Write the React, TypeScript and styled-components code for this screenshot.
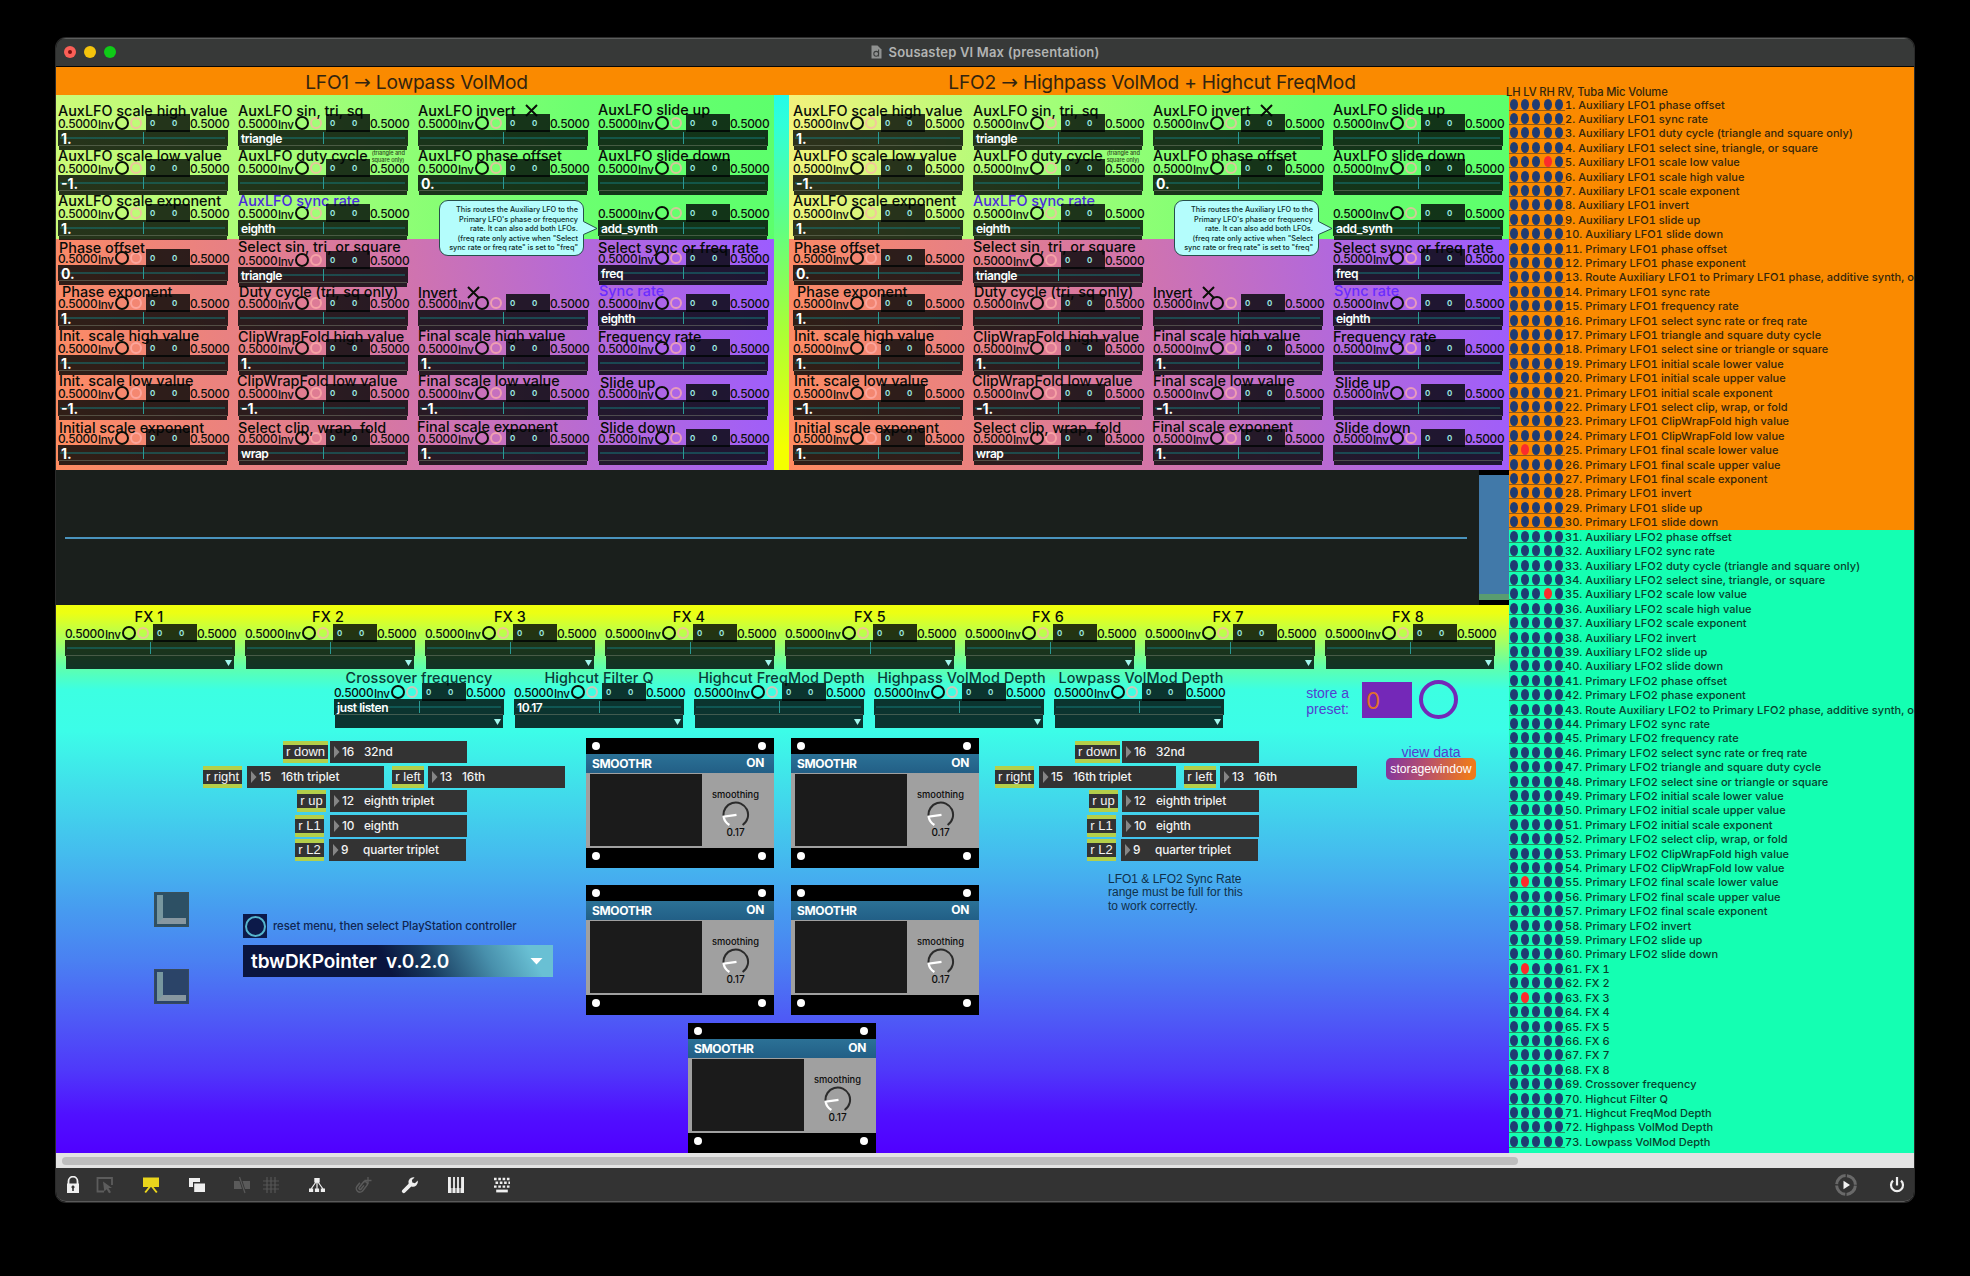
import React from 'react';
import styled, { createGlobalStyle, css } from 'styled-components';

const Global = createGlobalStyle`
  * { box-sizing: border-box; }
  html, body { margin: 0; background: #000; }
  body { width: 1970px; height: 1276px; overflow: hidden; font-family: Inter, "Liberation Sans", sans-serif; color: #0b0f0b; }
`;

/* ---------- window ---------- */

const Desktop = styled.main`
  width: 1970px;
  height: 1276px;
  padding: 38px 56px 0;
  background: #000;
`;

const Window = styled.section`
  display: flex;
  flex-direction: column;
  width: 1858px;
  height: 1164px;
  border-radius: 10px;
  overflow: hidden;
  box-shadow: 0 0 0 1px #2b2b2b;
`;

const TitleBar = styled.header`
  display: grid;
  grid-template-columns: 1fr auto 1fr;
  align-items: center;
  height: 29px;
  padding: 0 8px 1px;
  background: #373938;
  border-top: 1px solid #5c5e5d;
  border-bottom: 1px solid #050505;
`;

const Lights = styled.div`
  display: flex;
  gap: 8px;
`;

const Light = styled.span<{ $color: string }>`
  display: grid;
  place-items: center;
  width: 12px;
  height: 12px;
  border-radius: 50%;
  background: ${(p) => p.$color};
  i { width: 4px; height: 4px; border-radius: 50%; background: #7a0d0d; }
`;

const WindowTitle = styled.h1`
  display: flex;
  align-items: center;
  gap: 7px;
  margin: 0;
  font-size: 13px;
  font-weight: 600;
  letter-spacing: 0.18px;
  color: #b2b4b3;
  white-space: nowrap;
`;

const Content = styled.div`
  display: flex;
  height: 1086px;
`;

const Patch = styled.div`
  display: flex;
  flex-direction: column;
  width: 1453px;
`;

/* ---------- LFO panels ---------- */

const Headings = styled.div`
  display: grid;
  grid-template-columns: 721px 732px;
  height: 28px;
  background: #fa8a00;
`;

const Heading = styled.h2<{ $shift?: number }>`
  margin: 0;
  padding-left: ${(p) => p.$shift ?? 0}px;
  text-align: center;
  font-size: 19.2px;
  font-weight: 400;
  line-height: 31px;
  letter-spacing: -0.22px;
  color: #33240f;
  white-space: nowrap;
  span { font-family: "DejaVu Sans", sans-serif; font-size: 20px; line-height: 1; }
`;

const Panels = styled.div`
  display: flex;
  height: 375px;
  background: linear-gradient(#25fbe8, #30ffd8 8%, #62ff80 36%, #a8ff38 62%, #f4ff00 94%);
`;

const LfoPanel = styled.section<{ $second?: boolean }>`
  position: relative;
  display: grid;
  grid-template-columns: repeat(4, 170px);
  grid-auto-rows: 45px;
  column-gap: 10px;
  align-content: start;
  width: ${(p) => (p.$second ? 720 : 718)}px;
  margin-left: ${(p) => (p.$second ? 15 : 0)}px;
  padding: 5px 0 0 ${(p) => (p.$second ? 4 : 2)}px;
  background:
    linear-gradient(95deg, ${(p) => (p.$second ? '#f3f27c' : '#ccfa78')}, #a2fe78 36%, #6cff70 72%, #5cff6c) 0 0 / 100% 144px no-repeat,
    linear-gradient(80deg, #ff8c60, #e78084 28%, #cf73b0 52%, #b268dc 76%, #9c5cff) 0 144px / 100% 231px no-repeat;
`;

const Cell = styled.div<{ $dy?: number }>`
  width: 170px;
  height: 45px;
  margin-top: ${(p) => p.$dy ?? 0}px;
`;

const CellTitle = styled.h3<{ $dx?: number; $dy?: number; $color?: string; $center?: boolean }>`
  display: flex;
  align-items: center;
  justify-content: ${(p) => (p.$center ? 'center' : 'flex-start')};
  height: 14px;
  margin: 0;
  padding-top: 7px;
  font-size: 14.4px;
  font-weight: 500;
  line-height: 21px;
  letter-spacing: ${(p) => (p.$center ? 0.12 : 0)}px;
  white-space: nowrap;
  color: ${(p) => p.$color ?? '#080c08'};
  transform: translate(${(p) => p.$dx ?? 0}px, ${(p) => p.$dy ?? 0}px);
  svg { margin-left: 9px; }
`;

const TinyNote = styled.small`
  margin: 3px 0 0 4px;
  font-size: 5.6px;
  font-weight: 500;
  line-height: 7px;
  letter-spacing: -0.05px;
  color: #2d4a20;
`;

const ControlRow = styled.div`
  display: grid;
  grid-template-columns: 40px 16px 14px 1fr 44px 38px;
  height: 16px;
  font-weight: 500;
  line-height: 20px;
  white-space: nowrap;
`;

const Amount = styled.span`
  font-size: 11.9px;
  letter-spacing: -0.32px;
`;

const Inv = styled.span`
  font-size: 11.6px;
  line-height: 23px;
  letter-spacing: -0.3px;
`;

const Ring = styled.span<{ $pink?: boolean }>`
  align-self: start;
  width: ${(p) => (p.$pink ? 12 : 14)}px;
  height: ${(p) => (p.$pink ? 12 : 14)}px;
  margin: ${(p) => (p.$pink ? '3px 0 0 2px' : '2px 0 0 1px')};
  border: 2px solid ${(p) => (p.$pink ? 'rgba(255, 178, 172, 0.72)' : '#0a0f08')};
  border-radius: 50%;
`;

const Pair = styled.span`
  position: relative;
  display: flex;
  gap: 17px;
  height: 18px;
  padding-left: 4px;
  background: rgba(0, 5, 5, 0.81);
  font-size: 8px;
  font-weight: 600;
  line-height: 18px;
  color: #9ff0e6;
  span { width: 5px; }
`;

const SliderBar = styled.div<{ $numeric?: boolean }>`
  position: relative;
  height: 16px;
  padding-left: 3px;
  background:
    linear-gradient(#2a9a94, #2a9a94) 85px 2px / 1px 12px no-repeat,
    linear-gradient(rgba(20, 120, 120, 0.5), rgba(20, 120, 120, 0.5)) 2px 7px / 165px 2px no-repeat,
    rgba(0, 5, 5, 0.81);
  color: #fff;
  font-size: ${(p) => (p.$numeric ? 14 : 12)}px;
  font-weight: ${(p) => (p.$numeric ? 700 : 600)};
  line-height: ${(p) => (p.$numeric ? 17 : 18)}px;
  letter-spacing: ${(p) => (p.$numeric ? 0 : -0.42)}px;
`;

const Strip = styled.div<{ $menu?: boolean }>`
  position: relative;
  display: flex;
  align-items: center;
  justify-content: flex-end;
  height: ${(p) => (p.$menu ? 13 : 4)}px;
  margin: 0 1px;
  padding-right: 2px;
  background: rgba(0, 5, 5, 0.81);
  box-shadow: 0 -1px 0 rgba(130, 140, 120, 0.45);
`;

const Bubble = styled.aside<{ $left: number }>`
  position: absolute;
  left: ${(p) => p.$left}px;
  top: 105px;
  width: 145px;
  height: 56px;
  padding: 4px 5px 0 0;
  border: 1px solid #26504c;
  border-radius: 9px;
  background: #b4fdfc;
  font-size: 7.3px;
  font-weight: 500;
  line-height: 9.55px;
  letter-spacing: -0.01px;
  text-align: right;
  white-space: nowrap;
  color: #10302e;
  svg { position: absolute; left: 142px; top: 19px; }
`;

/* ---------- scope ---------- */

const Scope = styled.section`
  display: grid;
  grid-template-columns: 1fr 30px;
  height: 135px;
  background: #1a1f1c;
`;

const Trace = styled.div`
  align-self: center;
  height: 2px;
  margin: 0 12px 0 9px;
  background: #4a93bd;
`;

const Meter = styled.div`
  background: linear-gradient(#000 5px, #4179a9 5px 124px, #599c70 124px 130px, #000 130px);
`;

/* ---------- lower patch ---------- */

const Stage = styled.section`
  height: 548px;
  padding-top: 5px;
  background: linear-gradient(
    #f0ff0c 0, #ecff14 1.5%, #a8ff60 6.5%, #62ffa8 11%, #3cffe2 15.5%, #3cfde8 23%, #40e2ea 32%,
    #44bdee 45%, #479af0 56%, #4a80f2 65%, #4e5cf6 75%, #4f38fa 85%, #5010ff 93%, #5000ff 100%
  );
`;

const FxRow = styled.div`
  display: flex;
  gap: 10px;
  height: 59px;
  padding-left: 9px;
`;

const FilterRow = styled(FxRow)`
  padding-left: 278px;
`;

const Store = styled.div`
  display: flex;
  align-items: flex-start;
  margin: 13px 0 0 72px;
`;

const StoreLabel = styled.p`
  width: 43px;
  margin: 3px 13px 0 0;
  font: 14px/16px "Liberation Sans", Arial, sans-serif;
  text-align: right;
  white-space: nowrap;
  color: #5340cf;
`;

const StoreNumber = styled.span`
  width: 50px;
  height: 36px;
  padding-left: 4px;
  background: #7428b8;
  color: #e2702a;
  font-size: 22.5px;
  line-height: 37px;
`;

const StoreRing = styled.span`
  width: 39px;
  height: 39px;
  margin: -2px 0 0 7px;
  border: 4.5px solid #7428b8;
  border-radius: 50%;
`;

const Body = styled.div`
  display: flex;
`;

const LeftColumn = styled.div`
  width: 530px;
  padding-top: 13px;
`;

const PadGroup = styled.div<{ $left: number }>`
  display: flex;
  flex-direction: column;
  gap: 2.5px;
  width: 362px;
  margin-left: ${(p) => p.$left}px;
`;

const PadRow = styled.div<{ $left: number }>`
  display: flex;
  height: 22px;
  padding-left: ${(p) => p.$left}px;
`;

const Receive = styled.span<{ $w: number; $gap: number; $before?: number }>`
  width: ${(p) => p.$w}px;
  margin: 0 ${(p) => p.$gap}px 0 ${(p) => p.$before ?? 0}px;
  border-top: 4px solid #b4cf4a;
  border-bottom: 4px solid #b4cf4a;
  background: #333;
  color: #f4f4f4;
  font-family: "Liberation Sans", Arial, sans-serif;
  font-size: 13px;
  line-height: 14px;
  text-align: center;
  white-space: nowrap;
`;

const NumberBox = styled.span`
  display: grid;
  grid-template-columns: 8px 22px 1fr;
  align-items: center;
  width: 137px;
  padding-left: 4px;
  background: #333;
  color: #f4f4f4;
  font-size: 11.8px;
  font-weight: 500;
  letter-spacing: -0.1px;
  white-space: nowrap;
`;

const Lower = styled.div`
  display: flex;
  margin: 31px 0 0 98px;
`;

const Corners = styled.div`
  display: flex;
  flex-direction: column;
  gap: 42px;
`;

const Corner = styled.span<{ $color: string }>`
  display: flex;
  width: 35px;
  height: 35px;
  padding: 2px;
  background: ${(p) => p.$color};
  border: 1px solid rgba(70, 80, 80, 0.5);
  &::before {
    content: '';
    flex: 1;
    border-left: 6px solid #77979f;
    border-bottom: 6px solid #8797a0;
  }
`;

const Controller = styled.div`
  margin: 22px 0 0 54px;
`;

const ResetLine = styled.div`
  display: flex;
  align-items: center;
  gap: 6px;
  height: 24px;
  font-size: 11.3px;
  font-weight: 500;
  letter-spacing: -0.03px;
  white-space: nowrap;
  color: #0f2550;
`;

const ResetButton = styled.span`
  display: grid;
  place-items: center;
  width: 24px;
  height: 24px;
  background: #0c1a4a;
  &::before {
    content: '';
    width: 17px;
    height: 17px;
    border: 2px solid #55b5cd;
    border-radius: 50%;
  }
`;

const DeviceMenu = styled.div`
  display: flex;
  align-items: center;
  justify-content: space-between;
  width: 310px;
  height: 32px;
  margin-top: 7px;
  padding: 0 10px 0 8px;
  background: linear-gradient(62deg, #0a153f 46%, #16385c 58%, #4890ac 78%, #69c0d4 92%);
  color: #fff;
  font-size: 19px;
  font-weight: 600;
  letter-spacing: -0.1px;
  white-space: pre;
`;

const Modules = styled.div`
  display: grid;
  grid-template-columns: 188px 188px;
  column-gap: 17px;
  width: 393px;
  padding-top: 10px;
`;

const Module = styled.article<{ $top?: number; $last?: boolean }>`
  width: 188px;
  height: 130px;
  margin-top: ${(p) => p.$top ?? 0}px;
  ${(p) => p.$last && css`grid-column: 1 / 3; justify-self: start; margin-left: 102px;`}
  background: #000;
`;

const Screws = styled.div<{ $h: number }>`
  display: flex;
  justify-content: space-between;
  height: ${(p) => p.$h}px;
  padding: 4px 8.5px 0 6px;
  &::before, &::after {
    content: '';
    width: 8px;
    height: 8px;
    border-radius: 50%;
    background: #fff;
  }
`;

const ModuleBar = styled.div`
  display: flex;
  justify-content: space-between;
  height: 19px;
  padding: 0 10px 0 6px;
  background: linear-gradient(#2b7196, #225f86);
  color: #fff;
  font-size: 12px;
  font-weight: 700;
  line-height: 19px;
  letter-spacing: -0.35px;
  span { line-height: 17px; }
`;

const ModuleFace = styled.div`
  display: flex;
  height: 75px;
  padding: 1px 0 2px 4px;
  background: #a0a0a0;
`;

const Screen = styled.div`
  width: 112px;
  background: #1b1b1b;
`;

const Dial = styled.div`
  display: flex;
  flex-direction: column;
  align-items: center;
  width: 67px;
  padding-top: 15px;
  font-size: 9.3px;
  font-weight: 500;
  line-height: 12px;
  color: #0c0c0c;
  b { margin-top: -2px; font-size: 10px; font-weight: 500; }
`;

const RightColumn = styled.div`
  width: 530px;
  padding: 13px 0 0 16px;
`;

const RightTop = styled.div`
  display: flex;
`;

const Storage = styled.div`
  width: 90px;
  margin: 4px 0 0 29px;
  text-align: center;
  font: 14px/14px "Liberation Sans", Arial, sans-serif;
  color: #5340cf;
`;

const StorageButton = styled.div`
  height: 22px;
  margin-top: -1px;
  border-radius: 5px;
  background: linear-gradient(100deg, #8035a0, #b8506c 45%, #ee7a1c 92%);
  color: #fff;
  font-size: 12.2px;
  line-height: 22px;
`;

const SyncNote = styled.p`
  margin: 12px 0 0 113px;
  font: 12px/13.4px "Liberation Sans", Arial, sans-serif;
  color: #10304a;
  white-space: nowrap;
`;

/* ---------- route list ---------- */

const Routes = styled.aside`
  width: 405px;
  padding-top: 20.5px;
  background: linear-gradient(#fa8a00 463px, #14ffb2 463px);
`;

const RouteHead = styled.p`
  position: relative;
  height: 9px;
  margin: 0 0 0 -3px;
  font-size: 11.2px;
  font-weight: 500;
  line-height: 9px;
  letter-spacing: -0.12px;
  white-space: nowrap;
  color: #33260c;
`;

const RouteRow = styled.div<{ $teal: boolean }>`
  display: flex;
  height: 14.415px;
  font-size: 11px;
  font-weight: 500;
  font-variant-numeric: tabular-nums;
  line-height: 17px;
  letter-spacing: 0.04px;
  white-space: nowrap;
  color: ${(p) => (p.$teal ? '#083f2c' : '#33260c')};
`;

const Dots = styled.span`
  display: flex;
  flex: none;
  gap: 3.2px;
  width: 56px;
  height: 14px;
  padding: 2px 0 0 1px;
  border-bottom: 1px solid rgba(60, 50, 40, 0.55);
`;

const Dot = styled.i<{ $on: boolean }>`
  width: 8px;
  height: 11px;
  border-radius: 50%;
  background: ${(p) => (p.$on ? '#fb2c2c' : '#1f3c72')};
`;

/* ---------- bottom bars ---------- */

const ScrollTrack = styled.div`
  height: 15px;
  padding: 4px 6px;
  background: #e3e3e3;
`;

const ScrollThumb = styled.div`
  width: 1456px;
  height: 8px;
  border-radius: 4px;
  background: #bdbdbd;
`;

const Toolbar = styled.footer`
  display: flex;
  align-items: center;
  height: 34px;
  background: #333;
  border-bottom: 1px solid #5a5a5a;
  border-radius: 0 0 10px 10px;
`;

const Tool = styled.span<{ $before: number; $color?: string; $w?: number }>`
  display: flex;
  flex: none;
  width: ${(p) => p.$w ?? 18}px;
  margin-left: ${(p) => p.$before}px;
  color: ${(p) => p.$color ?? '#efefef'};
`;

/* ---------- data ---------- */

type CellSpec = {
  t?: string; v?: string; dx?: number; dy?: number; color?: string; cross?: boolean; note?: boolean; cellDy?: number;
} | null;

const LINK = '#4a2bdc';
const SYNC = '#6a2cff';

const LFO_CELLS: CellSpec[] = [
  { t: 'AuxLFO scale high value', v: '1.' },
  { t: 'AuxLFO sin, tri, sq', v: 'triangle' },
  { t: 'AuxLFO invert', cross: true },
  { t: 'AuxLFO slide up', dy: -1.5 },
  { t: 'AuxLFO scale low value', v: '-1.' },
  { t: 'AuxLFO duty cycle', note: true },
  { t: 'AuxLFO phase offset', v: '0.' },
  { t: 'AuxLFO slide down' },
  { t: 'AuxLFO scale exponent', v: '1.' },
  { t: 'AuxLFO sync rate', v: 'eighth', color: LINK },
  null,
  { v: 'add_synth' },
  { t: 'Phase offset', v: '0.', dx: 1, dy: 1.5 },
  { t: 'Select sin, tri, or square', v: 'triangle', dy: -1.5, cellDy: 2 },
  null,
  { t: 'Select sync or freq rate', v: 'freq', dy: 1.5 },
  { t: 'Phase exponent', v: '1.', dx: 4, dy: 1 },
  { t: 'Duty cycle (tri, sq only)', dx: 1, dy: 1 },
  { t: 'Invert', cross: true, dy: 2 },
  { t: 'Sync rate', v: 'eighth', color: SYNC, dx: 1 },
  { t: 'Init. scale high value', v: '1.', dx: 1 },
  { t: 'ClipWrapFold high value', v: '1.', dy: 0.5 },
  { t: 'Final scale high value', v: '1.' },
  { t: 'Frequency rate', dy: 0.5 },
  { t: 'Init. scale low value', v: '-1.', dx: 1 },
  { t: 'ClipWrapFold low value', v: '-1.', dx: -1 },
  { t: 'Final scale low value', v: '-1.' },
  { t: 'Slide up', dx: 2, dy: 2 },
  { t: 'Initial scale exponent', v: '1.', dx: 1, dy: 2 },
  { t: 'Select clip, wrap, fold', v: 'wrap', dy: 2 },
  { t: 'Final scale exponent', v: '1.', dx: -1, dy: 0.5 },
  { t: 'Slide down', dx: 2, dy: 2 },
];

const FX_SHIFT = [-1, -2, 0, -1, 0, -2, -2, -2];

const FILTERS = [
  { t: 'Crossover frequency', v: 'just listen', dx: 0 },
  { t: 'Highcut Filter Q', v: '10.17', dx: 0 },
  { t: 'Highcut FreqMod Depth', v: '', dx: 2.5 },
  { t: 'Highpass VolMod Depth', v: '', dx: 2.5 },
  { t: 'Lowpass VolMod Depth', v: '', dx: 2 },
];

const AUX = [
  'phase offset', 'sync rate', 'duty cycle (triangle and square only)', 'select sine, triangle, or square',
  'scale low value', 'scale high value', 'scale exponent', 'invert', 'slide up', 'slide down',
];

const PRIMARY = [
  'phase offset', 'phase exponent', 'route', 'sync rate', 'frequency rate', 'select sync rate or freq rate',
  'triangle and square duty cycle', 'select sine or triangle or square',
  'initial scale lower value', 'initial scale upper value', 'initial scale exponent',
  'select clip, wrap, or fold', 'ClipWrapFold high value', 'ClipWrapFold low value',
  'final scale lower value', 'final scale upper value', 'final scale exponent', 'invert', 'slide up', 'slide down',
];

const lfoRoutes = (n: number) => [
  ...AUX.map((s) => `Auxiliary LFO${n} ${s}`),
  ...PRIMARY.map((s) =>
    s === 'route' ? `Route Auxiliary LFO${n} to Primary LFO${n} phase, additive synth, o` : `Primary LFO${n} ${s}`,
  ),
];

const ROUTES = [
  ...lfoRoutes(1),
  ...lfoRoutes(2),
  ...[1, 2, 3, 4, 5, 6, 7, 8].map((n) => `FX ${n}`),
  ...FILTERS.map((f) => f.t),
];

const ACTIVE: Record<number, number> = { 5: 3, 25: 1, 35: 3, 55: 1, 61: 1, 63: 1 };

/* ---------- parts ---------- */

const Cross = () => (
  <svg width="13" height="13" viewBox="0 0 13 13">
    <path d="M1 1 12 12M12 1 1 12" stroke="#0a0f08" strokeWidth="2" fill="none" />
  </svg>
);

const Controls = ({ value, menu }: { value?: string; menu?: boolean }) => {
  const numeric = !!value && !menu && /^-?\d/.test(value);
  return (
    <>
      <ControlRow>
        <Amount>0.5000</Amount>
        <Inv>Inv</Inv>
        <Ring />
        <Ring $pink />
        <Pair><span>0</span><span>0</span></Pair>
        <Amount>0.5000</Amount>
      </ControlRow>
      <SliderBar $numeric={numeric}>{value}</SliderBar>
      <Strip $menu={menu}>
        {menu && (
          <svg width="7" height="6" viewBox="0 0 7 6"><path d="M0 0H7L3.5 6Z" fill="#a2f7ee" /></svg>
        )}
      </Strip>
    </>
  );
};

const Lfo = ({ second }: { second?: boolean }) => (
  <LfoPanel $second={second}>
    {LFO_CELLS.map((c, i) =>
      c === null ? <span key={i} /> : (
        <Cell key={i} $dy={c.cellDy}>
          <CellTitle $dx={c.dx} $dy={c.dy} $color={c.color}>
            {c.t}
            {c.cross && <Cross />}
            {c.note && <TinyNote>(triangle and<br />square only)</TinyNote>}
          </CellTitle>
          <Controls value={c.v} />
        </Cell>
      ),
    )}
    <Bubble $left={second ? 385 : 383}>
      This routes the Auxiliary LFO to the<br />
      Primary LFO's phase or frequency<br />
      rate. It can also add both LFOs.<br />
      (freq rate only active when "Select<br />
      sync rate or freq rate" is set to "freq"
      <svg width="16" height="16" viewBox="0 0 16 16">
        <path d="M0 1.5H1.5L15 8.5 1.5 14.5H0Z" fill="#b4fdfc" />
        <path d="M1.5 1.5 15 8.5 1.5 14.5" fill="none" stroke="#26504c" />
      </svg>
    </Bubble>
  </LfoPanel>
);

const Num = ({ n, label }: { n: number; label: string }) => (
  <NumberBox>
    <svg width="6" height="12" viewBox="0 0 6 12"><path d="M0 0 5.5 6 0 12Z" fill="#868686" /></svg>
    <span>{n}</span>
    <span>{label}</span>
  </NumberBox>
);

const Pad = ({ left }: { left: number }) => (
  <PadGroup $left={left}>
    <PadRow $left={80}><Receive $w={45} $gap={2}>r down</Receive><Num n={16} label="32nd" /></PadRow>
    <PadRow $left={0}>
      <Receive $w={39} $gap={5}>r right</Receive><Num n={15} label="16th triplet" />
      <Receive $w={32} $gap={4} $before={8}>r left</Receive><Num n={13} label="16th" />
    </PadRow>
    <PadRow $left={94}><Receive $w={29} $gap={4}>r up</Receive><Num n={12} label="eighth triplet" /></PadRow>
    <PadRow $left={92}><Receive $w={29} $gap={6}>r L1</Receive><Num n={10} label="eighth" /></PadRow>
    <PadRow $left={92}><Receive $w={29} $gap={5}>r L2</Receive><Num n={9} label="quarter triplet" /></PadRow>
  </PadGroup>
);

const Smoothr = ({ top, last }: { top?: number; last?: boolean }) => (
  <Module $top={top} $last={last}>
    <Screws $h={16} />
    <ModuleBar>SMOOTHR<span>ON</span></ModuleBar>
    <ModuleFace>
      <Screen />
      <Dial>
        smoothing
        <svg width="28" height="27" viewBox="0 0 28 27">
          <path d="M1.6 15.5A12.3 12.3 0 1 1 20.6 24" fill="none" stroke="#2b2b2b" strokeWidth="2" />
          <path d="M14.5 13.8 1.6 15.6A12.3 12.3 0 0 0 7.4 24" fill="none" stroke="#fff" strokeWidth="2.3" />
        </svg>
        <b>0.17</b>
      </Dial>
    </ModuleFace>
    <Screws $h={20} />
  </Module>
);

const Icon = ({ children }: { children: React.ReactNode }) => (
  <svg width="18" height="18" viewBox="0 0 18 18" fill="currentColor">{children}</svg>
);

const Tools = () => (
  <Toolbar>
    <Tool $before={8}>
      <Icon>
        <path d="M4.5 8V5.2a4.5 4.5 0 0 1 9 0V8" fill="none" stroke="currentColor" strokeWidth="1.8" />
        <path fillRule="evenodd" d="M3 7.5H15V17H3ZM9 9.6a1.5 1.5 0 0 0-.8 2.8V15h1.6V12.4A1.5 1.5 0 0 0 9 9.6Z" />
      </Icon>
    </Tool>
    <Tool $before={13.5} $color="#5c5c5c">
      <Icon>
        <path d="M8 15.5H1.5V2H16V9" fill="none" stroke="currentColor" strokeWidth="1.8" />
        <path d="M7 5.5 16 12H12.5L15 16.2 13 17.3 10.7 13.2 8.3 15.5Z" />
      </Icon>
    </Tool>
    <Tool $before={28} $color="#ead51c">
      <Icon>
        <path d="M1 1.5H17V11H1Z" />
        <path d="M8 10.5 3.2 16.5M10 10.5 14.8 16.5" stroke="currentColor" strokeWidth="2" />
      </Icon>
    </Tool>
    <Tool $before={28.5}>
      <Icon><path d="M1 2H12V6H5V11H1Z" /><path d="M6.2 7.4H17V16H6.2Z" /></Icon>
    </Tool>
    <Tool $before={27} $color="#5a5a5a">
      <Icon>
        <path d="M1 5H6.5L9 13H1Z" /><path d="M9.5 5H17V13H12Z" />
        <path d="M6.5 1 12 17" stroke="currentColor" strokeWidth="1.2" />
      </Icon>
    </Tool>
    <Tool $before={11} $color="#555">
      <Icon><path d="M5 1V17M9 1V17M13 1V17M1 5H17M1 9H17M1 13H17" stroke="currentColor" strokeWidth="1.2" fill="none" /></Icon>
    </Tool>
    <Tool $before={28}>
      <Icon>
        <path d="M6.3 2H11.7V6.6H6.3ZM1 12.5H5.2V16H1ZM6.9 12.5H11.1V16H6.9ZM12.8 12.5H17V16H12.8Z" />
        <path d="M9 5V13M8 6 3 13M10 6 15 13" stroke="currentColor" strokeWidth="1.2" />
      </Icon>
    </Tool>
    <Tool $before={28} $color="#5a5a5a">
      <Icon>
        <g transform="translate(7.5 10.5) rotate(38)" fill="none" stroke="currentColor" strokeWidth="1.5">
          <path d="M-3.6 -2V2.6A3.6 3.6 0 0 0 3.6 2.6V-4.2A2.4 2.4 0 0 0 -1.2 -4.2V2.2A1.2 1.2 0 0 0 1.2 2.2V-2.4" />
        </g>
        <path d="M14 1V8M10.5 4.5H17.5" stroke="currentColor" strokeWidth="1.3" />
      </Icon>
    </Tool>
    <Tool $before={28.5}>
      <Icon>
        <path d="M16.8 4.6 13.9 7.2 11.3 6.6 10.9 4.1 13.6 1.4A5 5 0 0 0 7.6 7.7L1.4 13.9A1.9 1.9 0 0 0 4.1 16.6L10.3 10.4A5 5 0 0 0 16.8 4.6Z" />
      </Icon>
    </Tool>
    <Tool $before={28.5}>
      <Icon>
        <path d="M1 1H17V17H1Z" />
        <path d="M5 1V17M9 1V17M13 1V17" stroke="#333" strokeWidth="0.9" />
        <path d="M5 1V12M9 1V12M13 1V12" stroke="#333" strokeWidth="2.2" />
      </Icon>
    </Tool>
    <Tool $before={27.5}>
      <Icon>
        <path d="M1 3H17M2.5 6.8H17M1 10.6H17" stroke="currentColor" strokeWidth="2.4" strokeDasharray="2.6 1.7" />
        <path d="M3.2 13.6H14.8V16.4H3.2Z" />
      </Icon>
    </Tool>
    <Tool $before={1323} $w={24}>
      <svg width="24" height="24" viewBox="0 0 24 24">
        <circle cx="12" cy="12" r="9.4" fill="none" stroke="#696969" strokeWidth="3" strokeDasharray="13.4 1.36" strokeDashoffset="-0.7" />
        <path d="M9.5 7.8 16 12 9.5 16.2Z" fill="#f2f2f2" />
      </svg>
    </Tool>
    <Tool $before={30.5}>
      <Icon>
        <path d="M5 4.6A6 6 0 1 0 13 4.6" fill="none" stroke="currentColor" strokeWidth="2.2" />
        <path d="M9 1V9.5" stroke="currentColor" strokeWidth="2.2" />
      </Icon>
    </Tool>
  </Toolbar>
);

export default function App() {
  return (
    <Desktop>
      <Global />
      <Window>
        <TitleBar>
          <Lights>
            <Light $color="#fb5f57"><i /></Light>
            <Light $color="#f5c40c" />
            <Light $color="#0fcb17" />
          </Lights>
          <WindowTitle>
            <svg width="11" height="14" viewBox="0 0 11 14">
              <path d="M0.5 0.5H6.5L10.5 4.5V13.5H0.5Z" fill="#8f9190" />
              <circle cx="5.2" cy="8.8" r="2.4" fill="none" stroke="#3b3d3c" strokeWidth="1.1" />
              <path d="M7.6 4.5V11.5" stroke="#3b3d3c" strokeWidth="1" />
            </svg>
            Sousastep VI Max (presentation)
          </WindowTitle>
        </TitleBar>
        <Content>
          <Patch>
            <Headings>
              <Heading>LFO1 <span>→</span> Lowpass VolMod</Heading>
              <Heading $shift={18}>LFO2 <span>→</span> Highpass VolMod + Highcut FreqMod</Heading>
            </Headings>
            <Panels>
              <Lfo />
              <Lfo second />
            </Panels>
            <Scope><Trace /><Meter /></Scope>
            <Stage>
              <FxRow>
                {FX_SHIFT.map((dx, i) => (
                  <Cell key={i}>
                    <CellTitle $center $dx={dx} $dy={-4}>FX {i + 1}</CellTitle>
                    <Controls menu />
                  </Cell>
                ))}
              </FxRow>
              <FilterRow>
                {FILTERS.map((f) => (
                  <Cell key={f.t}>
                    <CellTitle $center $dx={f.dx} $dy={-2.5} $color="#0a3a36">{f.t}</CellTitle>
                    <Controls menu value={f.v} />
                  </Cell>
                ))}
                <Store>
                  <StoreLabel>store a<br />preset:</StoreLabel>
                  <StoreNumber>0</StoreNumber>
                  <StoreRing />
                </Store>
              </FilterRow>
              <Body>
                <LeftColumn>
                  <Pad left={147} />
                  <Lower>
                    <Corners>
                      <Corner $color="#2d5064" />
                      <Corner $color="#2b4468" />
                    </Corners>
                    <Controller>
                      <ResetLine><ResetButton />reset menu, then select PlayStation controller</ResetLine>
                      <DeviceMenu>
                        {'tbwDKPointer  v.0.2.0'}
                        <svg width="13" height="7" viewBox="0 0 13 7"><path d="M0.5 0H12.5L6.5 6.5Z" fill="#fff" /></svg>
                      </DeviceMenu>
                    </Controller>
                  </Lower>
                </LeftColumn>
                <Modules>
                  <Smoothr />
                  <Smoothr />
                  <Smoothr top={17} />
                  <Smoothr top={17} />
                  <Smoothr top={8} last />
                </Modules>
                <RightColumn>
                  <RightTop>
                    <Pad left={0} />
                    <Storage>view data<StorageButton>storagewindow</StorageButton></Storage>
                  </RightTop>
                  <SyncNote>LFO1 &amp; LFO2 Sync Rate<br />range must be full for this<br />to work correctly.</SyncNote>
                </RightColumn>
              </Body>
            </Stage>
          </Patch>
          <Routes>
            <RouteHead>LH LV RH RV, Tuba Mic Volume</RouteHead>
            {ROUTES.map((r, i) => (
              <RouteRow key={i} $teal={i >= 30}>
                <Dots>{[0, 1, 2, 3, 4].map((d) => <Dot key={d} $on={ACTIVE[i + 1] === d} />)}</Dots>
                {i + 1}. {r}
              </RouteRow>
            ))}
          </Routes>
        </Content>
        <ScrollTrack><ScrollThumb /></ScrollTrack>
        <Tools />
      </Window>
    </Desktop>
  );
}
